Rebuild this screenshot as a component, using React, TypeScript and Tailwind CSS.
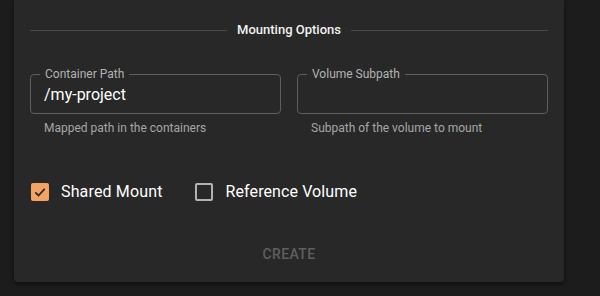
import React from "react";

function Field({ label, value, helper }: { label: string; value?: string; helper: string }) {
  return (
    <div className="flex-1 flex flex-col">
      <div className="relative h-[40px] rounded-[4px] border border-[#5e5e5e] flex items-center pl-[13px]">
        <span className="absolute left-[9px] top-[-9px] px-[5px] bg-[#282828] text-[12px] leading-[16px] text-[#b3b3b3]">
          {label}
        </span>
        <span className="text-[16px] leading-[20px] text-white pt-[2px]">{value}</span>
      </div>
      <div className="mt-[6px] pl-[14px] text-[12px] leading-[16px] text-[#a6a6a6]">{helper}</div>
    </div>
  );
}

export default function App() {
  return (
    <div
      className="w-[600px] h-[296px] bg-[#1c1c1c] overflow-hidden"
      style={{ fontFamily: "Roboto, 'Liberation Sans', sans-serif" }}
    >
      <div className="ml-[14px] w-[550px] bg-[#282828] rounded-b-[4px] px-[16px] pb-[18px] shadow-[0_2px_4px_rgba(0,0,0,0.5)]">
        <div className="pt-[22px] h-[38px] flex items-center gap-[10px]">
          <div className="flex-1 h-px bg-[#4a4a4a]" />
          <span className="text-[13px] leading-[16px] font-medium text-[#f0f0f0]">Mounting Options</span>
          <div className="flex-1 h-px bg-[#4a4a4a]" />
        </div>
        <div className="mt-[36px] flex gap-[16px]">
          <Field label="Container Path" value="/my-project" helper="Mapped path in the containers" />
          <Field label="Volume Subpath" helper="Subpath of the volume to mount" />
        </div>
        <div className="mt-[44px] h-[24px] flex items-center">
          <div className="flex items-center gap-[12px] ml-px">
            <div className="w-[18px] h-[18px] rounded-[2px] bg-[#f4a462] flex items-center justify-center">
              <svg width="14" height="14" viewBox="0 0 24 24">
                <path d="M4 12.5 L9.5 18 L20 6.5" fill="none" stroke="#282828" strokeWidth="3" />
              </svg>
            </div>
            <span className="text-[16px] leading-[20px] tracking-[0.15px] text-white">Shared Mount</span>
          </div>
          <div className="flex items-center gap-[13px] ml-[32px]">
            <div className="w-[18px] h-[18px] rounded-[2px] border-2 border-[#b3b3b3]" />
            <span className="text-[16px] leading-[20px] tracking-[0.1px] text-white">Reference Volume</span>
          </div>
        </div>
        <div className="mt-[40px] h-[20px] flex items-center justify-center">
          <span className="text-[14px] leading-[20px] font-medium tracking-[0.4px] text-[#5f5f5f]">CREATE</span>
        </div>
      </div>
    </div>
  );
}
